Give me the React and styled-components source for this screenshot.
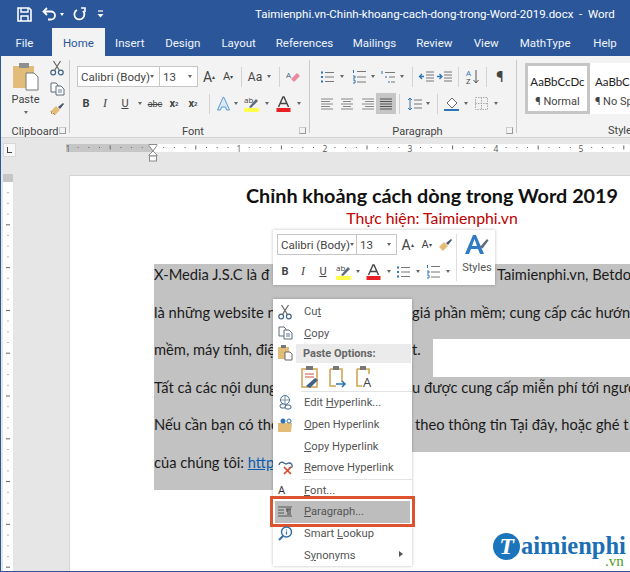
import React from "react";
import styled, { createGlobalStyle } from "styled-components";

const UI = `Roboto, "Open Sans", sans-serif`;
const DOC = `Lato, "Noto Sans", sans-serif`;

const GlobalStyle = createGlobalStyle`
  html, body { margin: 0; padding: 0; background: #e6e6e6; }
  * { box-sizing: border-box; }
`;

const Ico = ({ w = 16, h = 16, children }) => (
  <svg width={w} height={h} viewBox={`0 0 ${w} ${h}`} fill="none" overflow="visible">
    {children}
  </svg>
);

const SaveIcon = () => (
  <Ico w={15} h={15}>
    <path d="M1 1h11l2 2v11H1z" stroke="#fff" strokeWidth="1.6" />
    <path d="M4 1v4h7V1M4 14V9h7v5" stroke="#fff" strokeWidth="1.4" />
  </Ico>
);
const UndoIcon = () => (
  <Ico w={15} h={14}>
    <path d="M5 1L1.5 4.5 5 8" stroke="#fff" strokeWidth="1.8" />
    <path d="M2 4.5h7a4 4 0 0 1 0 8H6" stroke="#fff" strokeWidth="1.8" />
  </Ico>
);
const RedoIcon = () => (
  <Ico w={13} h={14}>
    <path d="M4 3a5 5 0 1 0 6 1" stroke="#fff" strokeWidth="1.8" />
    <path d="M8 1h4v4" stroke="#fff" strokeWidth="1.6" />
  </Ico>
);
const CustomizeIcon = () => (
  <Ico w={7} h={8}>
    <path d="M1 1h5" stroke="#fff" strokeWidth="1.2" />
    <path d="M.5 4h6L3.5 7.5z" fill="#fff" />
  </Ico>
);
const ScissorsIcon = () => (
  <Ico w={14} h={16}>
    <circle cx="3.2" cy="12.5" r="2.4" stroke="#3f6287" strokeWidth="1.2" />
    <circle cx="10.8" cy="12.5" r="2.4" stroke="#3f6287" strokeWidth="1.2" />
    <path d="M4.5 10.5L10.5 1M9.5 10.5L3.5 1" stroke="#666" strokeWidth="1.2" />
  </Ico>
);
const CopyIcon = () => (
  <Ico w={15} h={14}>
    <path d="M1 1h5l2 2v7H1z" fill="#fff" stroke="#5d6b78" />
    <path d="M6 4h5l3 3v6H6z" fill="#fff" stroke="#5d6b78" />
    <path d="M8 8h4M8 10h4" stroke="#5d7a9a" />
  </Ico>
);
const PainterIcon = () => (
  <Ico w={15} h={14}>
    <path d="M1 9l5-5 4 4-5 5z" fill="#e3bd76" />
    <path d="M2 12l-1-3M5 13l-2-2" stroke="#a8843f" />
    <path d="M8 5l5-4 1 1-4 5z" fill="#46586c" />
  </Ico>
);
const PasteIcon = () => (
  <Ico w={26} h={28}>
    <rect x="0" y="3" width="21" height="22" fill="#e2bd79" />
    <rect x="6" y="0" width="10" height="5" fill="#8f8f8f" />
    <path d="M13 10h8l4 4v13H13z" fill="#fff" stroke="#777" />
  </Ico>
);
const EraserIcon = () => (
  <Ico w={15} h={14}>
    <path d="M5 9l6-6 3 3-6 6z" fill="#ea8aa0" />
    <text x="0" y="8" fontSize="8" fontFamily="Open Sans" fill="#3f6287">A</text>
  </Ico>
);
const TextEffectIcon = () => (
  <Ico w={15} h={15}>
    <path d="M1.5 14L7 1.5h1L13.5 14h-3l-1-3h-4l-1 3z" fill="#dbe9f7" stroke="#5b9bd5" />
  </Ico>
);
const HighlightIcon = () => (
  <Ico w={16} h={16}>
    <text x="0" y="7" fontSize="8" fontFamily="Open Sans" fill="#444">ab</text>
    <path d="M5 11l7-8 2 2-7 7z" fill="#5d6b78" />
    <rect x="0" y="12" width="15" height="4" fill="#ffff4d" />
  </Ico>
);
const FontColorIcon = () => (
  <Ico w={15} h={16}>
    <path d="M2.5 11L7 1h1l4.5 10M4.5 7.5h6" stroke="#444" strokeWidth="1.4" />
    <rect x="0.5" y="12" width="14" height="4" fill="#e81f23" />
  </Ico>
);
const BulletsIcon = () => (
  <Ico w={14} h={14}>
    <path d="M1 2.5h2M1 7h2M1 11.5h2" stroke="#2e75b6" strokeWidth="2" />
    <path d="M5 2.5h9M5 7h9M5 11.5h9" stroke="#777" />
  </Ico>
);
const NumberedIcon = () => (
  <Ico w={14} h={15}>
    <path d="M1.5 1v3M1 7h2v2H1M1 11h2v3H1" stroke="#2e75b6" />
    <path d="M5 2.5h9M5 8h9M5 13h9" stroke="#777" />
  </Ico>
);
const MultilevelIcon = () => (
  <Ico w={14} h={14}>
    <path d="M1 1v3M5 6v2M8 11v2" stroke="#2e75b6" />
    <path d="M4 2.5h10M8 7h6M10 12h4" stroke="#777" />
  </Ico>
);
const IndentIcon = ({ out }) => (
  <Ico w={15} h={12}>
    <path d="M7 1h8M7 4h8M7 7h8M7 10h8" stroke="#777" />
    {out ? (
      <path d="M5 5.5H1M3 3L.5 5.5 3 8" stroke="#2e75b6" strokeWidth="1.3" />
    ) : (
      <path d="M0 5.5h4M2.5 3L5 5.5 2.5 8" stroke="#2e75b6" strokeWidth="1.3" />
    )}
  </Ico>
);
const SortIcon = () => (
  <Ico w={13} h={16}>
    <text x="0" y="7" fontSize="8" fontFamily="Open Sans" fill="#2e75b6">A</text>
    <text x="0" y="15" fontSize="8" fontFamily="Open Sans" fill="#444">Z</text>
    <path d="M10 1v13M7.5 11l2.5 3 2.5-3" stroke="#555" />
  </Ico>
);
const AlignIcon = ({ kind }) => {
  const lines = {
    left: "M1 1h12M1 3.500h9M1 6h12M1 8.500h9M1 11h12",
    center: "M1 1h12M3 3.500h8M1 6h12M3 8.500h8M1 11h12",
    right: "M1 1h12M4 3.500h9M1 6h12M4 8.500h9M1 11h12",
    justify: "M1 1h12M1 3.500h12M1 6h12M1 8.500h12M1 11h12",
  }[kind];
  return (
    <Ico w={14} h={12}>
      <path d={lines} stroke={kind === "justify" ? "#555" : "#888"} />
    </Ico>
  );
};
const SpacingIcon = () => (
  <Ico w={15} h={14}>
    <path d="M3 1v12M1 3l2-2 2 2M1 11l2 2 2-2" stroke="#2e75b6" />
    <path d="M7 3h8M7 7h8M7 11h8" stroke="#777" />
  </Ico>
);
const ShadingIcon = () => (
  <Ico w={16} h={16}>
    <path d="M3 7l5-5 5 5-5 5z" stroke="#666" fill="#fff" />
    <rect x="0" y="13" width="15" height="2" fill="#2e75b6" />
  </Ico>
);
const BordersIcon = () => (
  <Ico w={13} h={13}>
    <path d="M.5.5h12v12H.5zM6.5.5v12M.5 6.5h12" stroke="#aaa" strokeDasharray="1.5 1" />
  </Ico>
);
const BrushSmall = () => (
  <Ico w={15} h={14}>
    <path d="M1 9l5-5 4 4-5 5z" fill="#e3bd76" />
    <path d="M8 5l5-4 1 1-4 5z" fill="#46586c" />
  </Ico>
);
const BigAIcon = () => (
  <Ico w={26} h={22}>
    <path d="M1 20L9 1h3l8 19h-4l-2-5H7l-2 5zM8 12h5l-2.500-7z" fill="#2f7bc4" fillRule="evenodd" />
    <path d="M16 13l7-8 1.500 1.500-6 8z" fill="#5d6b78" />
  </Ico>
);
const PasteKeep = () => (
  <Ico w={20} h={22}>
    <rect x="1" y="3" width="15" height="18" fill="#fff" stroke="#d1a658" strokeWidth="1.6" />
    <rect x="5" y="0" width="7" height="4" fill="#777" />
    <path d="M4 8h9M4 11h9" stroke="#d2503c" />
    <path d="M5 20l9-8 3 2-8 8z" fill="#3f6287" />
  </Ico>
);
const PasteMerge = () => (
  <Ico w={20} h={22}>
    <path d="M2 3h12v13M2 3v17h6" stroke="#d1a658" strokeWidth="1.6" />
    <rect x="5" y="0" width="6" height="4" fill="#777" />
    <path d="M8 18h9M14 15l3 3-3 3" stroke="#2e75b6" strokeWidth="1.6" />
  </Ico>
);
const PasteText = () => (
  <Ico w={20} h={22}>
    <path d="M2 3h12v5M2 3v17h5" stroke="#d1a658" strokeWidth="1.6" />
    <rect x="5" y="0" width="6" height="4" fill="#777" />
    <text x="8" y="21" fontSize="13" fontFamily="Open Sans" fill="#444">A</text>
  </Ico>
);
const PasteSmall = () => (
  <Ico w={15} h={15}>
    <rect x="0" y="2" width="11" height="12" fill="#e2bd79" />
    <rect x="3" y="0" width="5" height="3" fill="#777" />
    <path d="M7 7h5l2 2v6H7z" fill="#fff" stroke="#666" />
  </Ico>
);
const LinkIcon = () => (
  <Ico w={15} h={15}>
    <circle cx="7" cy="5" r="4.500" stroke="#4a6f96" />
    <path d="M2.500 5h9M7 .5v9" stroke="#4a6f96" strokeWidth=".7" />
    <rect x="2" y="9" width="6" height="4" rx="2" fill="#fff" stroke="#3f6287" />
    <rect x="7" y="10" width="6" height="4" rx="2" fill="#fff" stroke="#3f6287" />
  </Ico>
);
const OpenLinkIcon = () => (
  <Ico w={15} h={14}>
    <path d="M0 5h14l-1 9H0z" fill="#e2bd79" />
    <circle cx="5" cy="3" r="2.500" fill="#2e75b6" />
    <circle cx="11" cy="3" r="2" stroke="#2e75b6" />
  </Ico>
);
const RemoveLinkIcon = () => (
  <Ico w={15} h={14}>
    <path d="M1 4a3 3 0 0 1 5-2l2 1 3-1a3 3 0 0 1 3 4l-3 1" stroke="#3f6287" strokeWidth="1.3" />
    <path d="M6 6l7 7M13 6l-7 7" stroke="#d9442a" strokeWidth="1.7" />
  </Ico>
);
const ParagraphIcon = () => (
  <Ico w={14} h={11}>
    <path d="M0 1h14M0 4h6M0 7h6M0 10h14" stroke="#555" />
    <path d="M8 3h5M10 3v6M12 3v6M9.500 3a2 2 0 0 0 0 3" stroke="#444" />
  </Ico>
);
const LookupIcon = () => (
  <Ico w={15} h={15}>
    <circle cx="8.500" cy="6" r="5" stroke="#2f6ea5" strokeWidth="1.4" />
    <path d="M5 10l-4 4" stroke="#2f6ea5" strokeWidth="2" />
    <path d="M8.500 3.500v1M8.500 5.500v3" stroke="#2f6ea5" strokeWidth="1.2" />
  </Ico>
);

const INCH = 85.6;
const ZERO = 153;

const HorizontalRuler = () => {
  const ticks = [];
  for (let i = -7; i < 45; i++) {
    const x = ZERO + (i * INCH) / 8;
    if (i % 8 === 0) continue;
    ticks.push(
      i % 4 === 0 ? (
        <path key={i} d={`M${x} 4.500v4`} stroke="#666" />
      ) : (
        <path key={i} d={`M${x} 6v1`} stroke="#666" />
      ),
    );
  }
  return (
    <svg width="630" height="24" viewBox="0 0 630 24">
      <rect x="66" y="4" width="87" height="8" fill="#c6c6c6" />
      <rect x="153" y="4" width="477" height="8" fill="#fff" />
      <g transform="translate(0,1)">{ticks}</g>
      {[[68, 1], [239, 1], [325, 2], [410, 3], [496, 4], [581, 5]].map(([x, n]) => (
        <text key={x} x={x} y="11.500" fontSize="8.500" fontFamily="Open Sans" fill="#555" textAnchor="middle">{n}</text>
      ))}
      <path d="M149 4.500h8v1L153 11l-4-5.500z" fill="#fff" stroke="#8a8a8a" />
      <path d="M149 16v-1l4-4 4 4v1z" fill="#fff" stroke="#8a8a8a" />
      <rect x="149.500" y="16" width="7" height="5" fill="#fff" stroke="#8a8a8a" />
    </svg>
  );
};

const VerticalRuler = () => {
  const ticks = [];
  for (let i = 1; i < 46; i++) {
    const y = 8 + (i * INCH) / 8;
    ticks.push(<path key={i} d={i % 4 === 0 ? `M3 ${y}h4` : `M4.500 ${y}h1`} stroke="#666" />);
  }
  return (
    <svg width="10" height="400" viewBox="0 0 10 400">
      <rect width="10" height="400" fill="#fff" />
      <rect width="10" height="8" fill="#c6c6c6" />
      {ticks}
    </svg>
  );
};

const Shell = styled.div`
  position: relative;
  width: 630px;
  height: 572px;
  overflow: hidden;
  display: flex;
  flex-direction: column;
  background: #e6e6e6;
  border-left: 1px solid #2b579a;
  border-bottom: 1px solid #2b579a;
  font-family: ${UI};
  color: #444;
`;

const TitleBar = styled.div`
  height: 28px;
  flex: none;
  display: flex;
  align-items: center;
  background: #2b579a;
  color: #fff;
  padding-left: 16px;
`;

const Quick = styled.div`
  width: ${(p) => p.$w}px;
  display: flex;
  align-items: center;
  gap: 3px;
`;

const DownCaret = styled.i`
  display: block;
  flex: none;
  width: 0;
  height: 0;
  border-left: 2.500px solid transparent;
  border-right: 2.500px solid transparent;
  border-top: 3px solid ${(p) => p.$color || "#666"};
`;

const DocName = styled.div`
  margin-left: 148px;
  font-size: 11.500px;
  white-space: pre;
`;

const TabBar = styled.div`
  height: 28px;
  flex: none;
  display: flex;
  background: #2b579a;
`;

const Tab = styled.div`
  width: ${(p) => p.$w}px;
  height: 28px;
  padding: 1px ${(p) => p.$pr || 0}px 0 0;
  display: flex;
  align-items: center;
  justify-content: center;
  font-size: 11.500px;
  color: ${(p) => (p.$active ? "#2b579a" : "#f0f4fa")};
  background: ${(p) => (p.$active ? "#f3f3f3" : "transparent")};
`;

const Ribbon = styled.div`
  height: 82px;
  flex: none;
  display: flex;
  background: #f3f3f3;
  border-bottom: 1px solid #d4d4d4;
`;

const Group = styled.div`
  position: relative;
  width: ${(p) => p.$w}px;
  flex: ${(p) => (p.$w ? "none" : 1)};
  min-width: 0;
  padding-left: ${(p) => p.$pad || 0}px;
  margin: 4px 0 4px;
  border-right: ${(p) => (p.$last ? "none" : "1px solid #c9c9c9")};
`;

const GroupBody = styled.div`
  height: 59px;
  margin-top: 6px;
  display: flex;
  flex-direction: ${(p) => (p.$row ? "row" : "column")};
  gap: ${(p) => (p.$row ? 0 : 6)}px;
`;

const GroupLabel = styled.div`
  text-align: center;
  font-size: 11px;
  line-height: 14px;
  color: #444;
`;

const StylesLabel = styled(GroupLabel)`
  margin-top: 10px;
  padding-left: 91px;
  text-align: left;
  white-space: nowrap;
`;

const Launcher = styled.span`
  position: absolute;
  right: 3px;
  bottom: -1px;
  width: 7px;
  height: 7px;
  border: 1px solid #999;
  border-top-color: #ccc;
  border-left-color: #ccc;
`;

const PasteColumn = styled.div`
  width: 47px;
  margin-top: -3px;
  padding-left: 2px;
  display: flex;
  flex-direction: column;
  align-items: center;
  font-size: 11px;
  color: #444;

  span {
    margin: 2px 0 4px;
    line-height: 14px;
  }
`;

const SmallColumn = styled.div`
  width: 18px;
  margin-top: -6px;
  display: flex;
  flex-direction: column;
  align-items: center;
  gap: 6px;
`;

const ToolRow = styled.div`
  height: 21px;
  display: flex;
  align-items: center;
`;

const Tool = styled.div`
  width: ${(p) => p.$w}px;
  height: 21px;
  flex: none;
  display: flex;
  align-items: center;
  justify-content: center;
  font-size: ${(p) => p.$size || 12}px;
  font-weight: ${(p) => (p.$bold ? 700 : 400)};
  font-style: ${(p) => (p.$italic ? "italic" : "normal")};
  text-decoration: ${(p) => (p.$under ? "underline" : "none")};
  background: ${(p) => (p.$on ? "#c6c6c6" : "transparent")};
  color: #444;
  font-family: ${(p) => (p.$serif ? `"Liberation Serif", serif` : UI)};

  sub, sup {
    font-size: 6px;
  }
`;

const Divider = styled.div`
  width: ${(p) => p.$w}px;
  flex: none;
  display: flex;
  justify-content: center;

  &::before {
    content: "";
    width: 1px;
    height: 20px;
    background: #d2d2d2;
  }
`;

const Combo = styled.div`
  width: ${(p) => p.$w}px;
  height: 21px;
  flex: none;
  display: flex;
  align-items: center;
  justify-content: space-between;
  padding: 0 5px 0 3px;
  background: #fff;
  border: 1px solid #c6c6c6;
  margin-left: ${(p) => (p.$joined ? "-1px" : 0)};
  font-size: 11.500px;
  color: #444;
  white-space: nowrap;
`;

const StyleGallery = styled.div`
  display: flex;
  margin: 3px 0 0 8px;
`;

const StyleCard = styled.div`
  width: ${(p) => p.$w}px;
  height: 51px;
  flex: none;
  background: #fff;
  border: ${(p) => (p.$active ? "3px solid #c6c6c6" : "none")};
  display: flex;
  flex-direction: column;
  align-items: ${(p) => (p.$active ? "center" : "flex-start")};
  padding-top: ${(p) => (p.$active ? 7 : 10)}px;
  padding-left: ${(p) => (p.$active ? 0 : 5)}px;
  overflow: hidden;
  white-space: nowrap;
  font-size: 11px;
  color: #444;

  b {
    font-family: ${DOC};
    font-weight: 400;
    font-size: 11.500px;
    line-height: 17px;
    color: #222;
  }

  span {
    margin-top: 5px;
  }
`;

const RulerRow = styled.div`
  height: 37px;
  flex: none;
  position: relative;
  display: flex;
`;

const TabStop = styled.div`
  position: absolute;
  left: 2px;
  top: 5px;
  width: 13px;
  height: 14px;
  background: #f8f8f8;
  border: 1px solid #d8d8d8;

  &::before {
    content: "";
    position: absolute;
    left: 3px;
    top: 3px;
    width: 4px;
    height: 5px;
    border-left: 1.500px solid #444;
    border-bottom: 1.500px solid #444;
  }
`;

const RulerTrack = styled.div`
  margin-left: -1px;
  padding-top: 2px;
`;

const Workspace = styled.div`
  flex: 1;
  display: flex;
  min-height: 0;
`;

const VerticalStrip = styled.div`
  width: 68px;
  flex: none;
  padding: 0 0 0 2px;
  margin-top: -1px;
`;

const Page = styled.div`
  flex: 1;
  background: #fff;
  border-left: 1px solid #d4d4d4;
  border-top: 1px solid #d4d4d4;
  padding: 7px 0 0 84px;
  overflow: hidden;
  font-family: ${DOC};
  color: #1a1a1a;
`;

const Heading = styled.div`
  width: 556px;
  text-align: center;
  height: 81px;
`;

const DocTitle = styled.div`
  font-size: 19.800px;
  font-weight: 700;
  line-height: 24px;
  color: #111;
  white-space: nowrap;
`;

const DocSub = styled.div`
  font-size: 15.800px;
  line-height: 22px;
  color: #c00000;
`;

const Line = styled.div`
  width: ${(p) => (p.$w ? `${p.$w}px` : "476px")};
  height: 37.600px;
  display: flex;
  background: #c2c2c2;
  font-size: 14.700px;
  line-height: 20px;
  white-space: nowrap;
  overflow: hidden;
`;

const LineStart = styled.span`
  width: ${(p) => p.$w || 258}px;
  flex: none;
`;

const DocLink = styled.span`
  color: #0b5cad;
  text-decoration: underline;
`;

const MiniToolbar = styled.div`
  position: absolute;
  left: 272px;
  top: 230px;
  width: 222px;
  height: 55px;
  background: #fff;
  box-shadow: 0 0 3px rgba(0, 0, 0, 0.25);
  padding: 4px 0 0 4px;
  display: flex;
`;

const MiniTools = styled.div`
  width: 179px;
  display: flex;
  flex-direction: column;
  gap: 6px;
`;

const MiniStyles = styled.div`
  width: 39px;
  height: 47px;
  border-left: 1px solid #dedede;
  display: flex;
  flex-direction: column;
  align-items: center;
  gap: 5px;
  padding-left: 2px;
  font-size: 11px;
  color: #555;
`;

const ContextMenu = styled.div`
  position: absolute;
  left: 272px;
  top: 299px;
  width: 139px;
  background: #fff;
  box-shadow: 0 0 3px rgba(0, 0, 0, 0.25);
  padding-top: 2px;
`;

const MenuItem = styled.div`
  position: relative;
  height: 21.600px;
  display: flex;
  align-items: center;
  font-size: 11.200px;
  color: #555;
  background: ${(p) => (p.$hot ? "#bdbdbd" : "transparent")};
  margin: ${(p) => (p.$hot ? "0 2px" : 0)};
  padding-left: ${(p) => (p.$hot ? 3 : 5)}px;

  ${(p) =>
    p.$hot &&
    `&::after {
      content: "";
      position: absolute;
      inset: -5px -5px -4px;
      border: 3px solid #dd5330;
      box-shadow: inset 0 0 0 1px #fff;
    }`}
`;

const MenuIcon = styled.div`
  width: 26px;
  flex: none;
  display: flex;
  align-items: center;
  justify-content: flex-start;
  font-size: 11px;
  color: #333;
`;

const MenuLabel = styled.span`
  white-space: pre;
`;

const MenuHeader = styled.div`
  height: 19px;
  margin-left: 23px;
  margin-right: 1px;
  padding-left: 7px;
  display: flex;
  align-items: center;
  font-size: 11px;
  font-weight: 700;
  color: #666;
  background: #ebebeb;
`;

const PasteIconStack = styled.div`
  position: absolute;
  left: 5px;
  top: 46px;
`;

const PasteRow = styled.div`
  height: 29px;
  margin-left: 28px;
  display: flex;
  align-items: center;
  gap: 7px;
  border-bottom: 1px solid #e2e2e2;
`;

const MenuRule = styled.div`
  height: 1px;
  margin-left: 28px;
  background: #e2e2e2;
`;

const Arrow = styled.i`
  position: absolute;
  right: 9px;
  top: 7px;
  width: 0;
  height: 0;
  border-top: 3px solid transparent;
  border-bottom: 3px solid transparent;
  border-left: 4px solid #555;
`;

const Logo = styled.div`
  position: absolute;
  left: 492px;
  top: 531px;
  width: 138px;
  height: 40px;
  display: flex;
  align-items: flex-start;
  font-family: "Liberation Serif", serif;
`;

const LogoMark = styled.div`
  width: 27px;
  height: 27px;
  margin-top: 2px;
  flex: none;
  border-radius: 50%;
  background: #1b75bc;
  color: #fff;
  display: flex;
  align-items: center;
  justify-content: center;
  font-size: 24px;
  font-weight: 700;
  font-style: italic;
`;

const LogoText = styled.div`
  margin-left: 1px;
  color: #1b6fb5;
  font-size: 24.500px;
  font-weight: 700;
  line-height: 30px;
  position: relative;

  small {
    position: absolute;
    right: 2px;
    top: 24px;
    font-size: 15px;
    line-height: 13px;
    font-weight: 400;
    color: #4c9a2a;
  }
`;

const tabs = [
  ["File", 51, false, 4], ["Home", 53, true], ["Insert", 50], ["Design", 56], ["Layout", 56],
  ["References", 76], ["Mailings", 64], ["Review", 56], ["View", 48], ["MathType", 70], ["Help", 50],
];

const App = () => {
  return (
    <Shell>
      <GlobalStyle />
      <TitleBar>
        <Quick $w={25}><SaveIcon /></Quick>
        <Quick $w={31}><UndoIcon /><DownCaret $color="#fff" /></Quick>
        <Quick $w={24}><RedoIcon /></Quick>
        <Quick $w={10}><CustomizeIcon /></Quick>
        <DocName>Taimienphi.vn-Chinh-khoang-cach-dong-trong-Word-2019.docx  -  Word</DocName>
      </TitleBar>
      <TabBar>
        {tabs.map(([label, w, active, pr]) => (
          <Tab key={label} $w={w} $active={active} $pr={pr}>{label}</Tab>
        ))}
      </TabBar>
      <Ribbon>
        <Group $w={69}>
          <GroupBody $row>
            <PasteColumn>
              <PasteIcon />
              <span>Paste</span>
              <DownCaret />
            </PasteColumn>
            <SmallColumn>
              <ScissorsIcon />
              <CopyIcon />
              <PainterIcon />
            </SmallColumn>
          </GroupBody>
          <GroupLabel>Clipboard</GroupLabel>
          <Launcher />
        </Group>
        <Group $w={240} $pad={7}>
          <GroupBody>
            <ToolRow>
              <Combo $w={83}>Calibri (Body) <DownCaret /></Combo>
              <Combo $w={39} $joined>13 <DownCaret /></Combo>
              <Tool $w={22} $size={14}>A<sup>▴</sup></Tool>
              <Tool $w={16} $size={11}>A<sup>▾</sup></Tool>
              <Divider $w={10} />
              <Tool $w={18} $size={12}>Aa</Tool>
              <Tool $w={10}><DownCaret /></Tool>
              <Divider $w={10} />
              <Tool $w={18}><EraserIcon /></Tool>
            </ToolRow>
            <ToolRow>
              <Tool $w={18} $bold $size={11}>B</Tool>
              <Tool $w={20} $italic $serif $size={12}>I</Tool>
              <Tool $w={20} $under $size={11}>U</Tool>
              <Tool $w={10}><DownCaret /></Tool>
              <Tool $w={20} $size={9}><s>abc</s></Tool>
              <Tool $w={18} $size={11} $bold>x<sub>2</sub></Tool>
              <Tool $w={20} $size={11} $bold>x<sup>2</sup></Tool>
              <Divider $w={12} />
              <Tool $w={17}><TextEffectIcon /></Tool>
              <Tool $w={8}><DownCaret /></Tool>
              <Tool $w={24}><HighlightIcon /></Tool>
              <Tool $w={6}><DownCaret /></Tool>
              <Tool $w={26}><FontColorIcon /></Tool>
              <Tool $w={6}><DownCaret /></Tool>
            </ToolRow>
          </GroupBody>
          <GroupLabel>Font</GroupLabel>
          <Launcher />
        </Group>
        <Group $w={207} $pad={9}>
          <GroupBody>
            <ToolRow>
              <Tool $w={16}><BulletsIcon /></Tool>
              <Tool $w={14}><DownCaret /></Tool>
              <Tool $w={20}><NumberedIcon /></Tool>
              <Tool $w={8}><DownCaret /></Tool>
              <Tool $w={22}><MultilevelIcon /></Tool>
              <Tool $w={6}><DownCaret /></Tool>
              <Divider $w={14} />
              <Tool $w={14}><IndentIcon out /></Tool>
              <Tool $w={22}><IndentIcon /></Tool>
              <Divider $w={6} />
              <Tool $w={22}><SortIcon /></Tool>
              <Divider $w={6} />
              <Tool $w={22} $size={15}>¶</Tool>
            </ToolRow>
            <ToolRow>
              <Tool $w={16}><AlignIcon kind="left" /></Tool>
              <Tool $w={24}><AlignIcon kind="center" /></Tool>
              <Tool $w={17}><AlignIcon kind="right" /></Tool>
              <Tool $w={20} $on><AlignIcon kind="justify" /></Tool>
              <Divider $w={6} />
              <Tool $w={24}><SpacingIcon /></Tool>
              <Tool $w={4}><DownCaret /></Tool>
              <Divider $w={14} />
              <Tool $w={16}><ShadingIcon /></Tool>
              <Tool $w={12}><DownCaret /></Tool>
              <Tool $w={18}><BordersIcon /></Tool>
              <Tool $w={12}><DownCaret /></Tool>
            </ToolRow>
          </GroupBody>
          <GroupLabel>Paragraph</GroupLabel>
          <Launcher />
        </Group>
        <Group $last>
          <StyleGallery>
            <StyleCard $active $w={65}>
              <b>AaBbCcDc</b>
              <span>¶ Normal</span>
            </StyleCard>
            <StyleCard $w={40}>
              <b>AaBbC</b>
              <span>¶ No Sp</span>
            </StyleCard>
          </StyleGallery>
          <StylesLabel>Styles</StylesLabel>
        </Group>
      </Ribbon>
      <RulerRow>
        <TabStop />
        <RulerTrack><HorizontalRuler /></RulerTrack>
      </RulerRow>
      <Workspace>
        <VerticalStrip><VerticalRuler /></VerticalStrip>
        <Page>
          <Heading>
            <DocTitle>Chỉnh khoảng cách dòng trong Word 2019</DocTitle>
            <DocSub>Thực hiện: Taimienphi.vn</DocSub>
          </Heading>
          <Line>
            <LineStart $w={343}>X-Media J.S.C là đ</LineStart>
            <span>Taimienphi.vn, Betdo</span>
          </Line>
          <Line>
            <LineStart>là những website n</LineStart>
            <span>giá phần mềm; cung cấp các hướng</span>
          </Line>
          <Line $w={279}>
            <LineStart>mềm, máy tính, điệ</LineStart>
            <span>t.</span>
          </Line>
          <Line>
            <LineStart>Tất cả các nội dung</LineStart>
            <span>u được cung cấp miễn phí tới ngườ</span>
          </Line>
          <Line>
            <LineStart $w={261}>Nếu cần bạn có thể</LineStart>
            <span>theo thông tin Tại đây, hoặc ghé t</span>
          </Line>
          <Line $w={258}>
            <span>của chúng tôi: <DocLink>http</DocLink></span>
          </Line>
        </Page>
      </Workspace>

      <MiniToolbar>
        <MiniTools>
          <ToolRow>
            <Combo $w={80}>Calibri (Body) <DownCaret /></Combo>
            <Combo $w={41} $joined>13 <DownCaret /></Combo>
            <Tool $w={21} $size={14}>A<sup>▴</sup></Tool>
            <Tool $w={17} $size={11}>A<sup>▾</sup></Tool>
            <Tool $w={20}><BrushSmall /></Tool>
          </ToolRow>
          <ToolRow>
            <Tool $w={16} $bold $size={11}>B</Tool>
            <Tool $w={20} $italic $serif $size={12}>I</Tool>
            <Tool $w={20} $under $size={11}>U</Tool>
            <Tool $w={21}><HighlightIcon /></Tool>
            <Tool $w={7}><DownCaret /></Tool>
            <Tool $w={24}><FontColorIcon /></Tool>
            <Tool $w={7}><DownCaret /></Tool>
            <Tool $w={22}><BulletsIcon /></Tool>
            <Tool $w={8}><DownCaret /></Tool>
            <Tool $w={22}><NumberedIcon /></Tool>
            <Tool $w={7}><DownCaret /></Tool>
          </ToolRow>
        </MiniTools>
        <MiniStyles>
          <BigAIcon />
          <span>Styles</span>
        </MiniStyles>
      </MiniToolbar>

      <ContextMenu>
        <MenuItem><MenuIcon><ScissorsIcon /></MenuIcon><MenuLabel>Cu<u>t</u></MenuLabel></MenuItem>
        <MenuItem><MenuIcon><CopyIcon /></MenuIcon><MenuLabel><u>C</u>opy</MenuLabel></MenuItem>
        <PasteIconStack><PasteSmall /></PasteIconStack>
        <MenuHeader>Paste Options:</MenuHeader>
        <PasteRow><PasteKeep /><PasteMerge /><PasteText /></PasteRow>
        <MenuItem><MenuIcon><LinkIcon /></MenuIcon><MenuLabel>Edit <u>H</u>yperlink...</MenuLabel></MenuItem>
        <MenuItem><MenuIcon><OpenLinkIcon /></MenuIcon><MenuLabel><u>O</u>pen Hyperlink</MenuLabel></MenuItem>
        <MenuItem><MenuIcon /><MenuLabel><u>C</u>opy Hyperlink</MenuLabel></MenuItem>
        <MenuItem><MenuIcon><RemoveLinkIcon /></MenuIcon><MenuLabel><u>R</u>emove Hyperlink</MenuLabel></MenuItem>
        <MenuRule />
        <MenuItem><MenuIcon>A</MenuIcon><MenuLabel><u>F</u>ont...</MenuLabel></MenuItem>
        <MenuItem $hot><MenuIcon><ParagraphIcon /></MenuIcon><MenuLabel><u>P</u>aragraph...</MenuLabel></MenuItem>
        <MenuItem><MenuIcon><LookupIcon /></MenuIcon><MenuLabel>Smart <u>L</u>ookup</MenuLabel></MenuItem>
        <MenuItem>
          <MenuIcon /><MenuLabel>S<u>y</u>nonyms</MenuLabel>
          <Arrow />
        </MenuItem>
      </ContextMenu>

      <Logo>
        <LogoMark>T</LogoMark>
        <LogoText>
          aimienphi
          <small>.vn</small>
        </LogoText>
      </Logo>
    </Shell>
  );
};

export default App;
